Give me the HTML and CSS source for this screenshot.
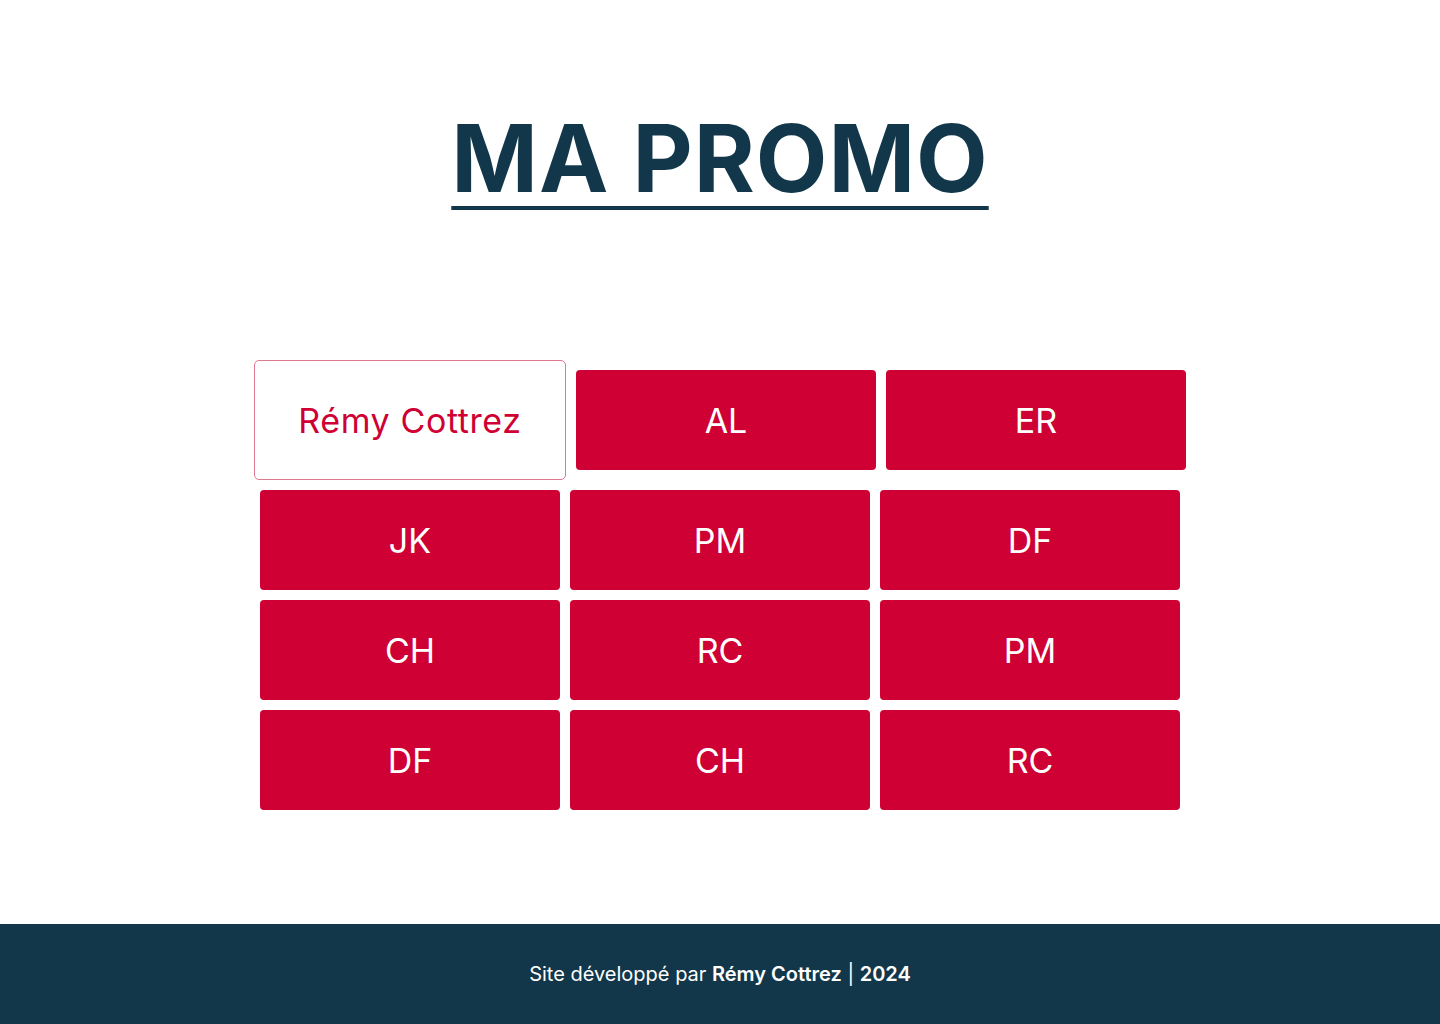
FILE: index.html
```html
<!DOCTYPE html>
<html lang="fr">
<head>
<meta charset="utf-8">
<title>Ma Promo</title>
<link rel="stylesheet" href="styles.css">
</head>
<body>
<header class="header">
  <h1 class="title">MA PROMO</h1>
</header>
<main class="main">
  <div class="grid">
    <div class="card card--active">Rémy Cottrez</div>
    <div class="card">AL</div>
    <div class="card">ER</div>
    <div class="card">JK</div>
    <div class="card">PM</div>
    <div class="card">DF</div>
    <div class="card">CH</div>
    <div class="card">RC</div>
    <div class="card">PM</div>
    <div class="card">DF</div>
    <div class="card">CH</div>
    <div class="card">RC</div>
  </div>
</main>
<footer class="footer">
  <p class="footer-text">Site développé par <strong>Rémy Cottrez</strong> | <strong>2024</strong></p>
</footer>
</body>
</html>
```
FILE: styles.css
```css
* { box-sizing: border-box; }
html, body { margin: 0; padding: 0; }
body {
  font-family: Inter, "Liberation Sans", sans-serif;
  background: #ffffff;
  min-height: 1024px;
  display: flex;
  flex-direction: column;
}
.header {
  display: flex;
  justify-content: center;
  padding-top: 112px;
}
.title {
  margin: 0;
  font-size: 93px;
  line-height: 1;
  font-weight: 700;
  color: #12374a;
  text-decoration: underline;
  text-decoration-thickness: 4px;
  text-underline-offset: 14px;
  letter-spacing: 1px;
}
.main {
  flex: 1;
  display: flex;
  justify-content: center;
  padding-top: 155px;
}
.grid {
  width: 940px;
  display: flex;
  flex-wrap: wrap;
  justify-content: center;
  align-items: center;
  align-content: flex-start;
  gap: 10px;
}
.card {
  width: 300px;
  height: 100px;
  background: #cf0033;
  color: #ffffff;
  border-radius: 4px;
  display: flex;
  align-items: center;
  justify-content: center;
  font-size: 34px;
  font-weight: 400;
}
.card--active {
  width: 312px;
  height: 120px;
  background: #ffffff;
  color: #cf0033;
  border: 1px solid #e07a90;
  border-radius: 5px;
  letter-spacing: 0.6px;
}
.footer {
  height: 100px;
  background: #12374a;
  display: flex;
  align-items: center;
  justify-content: center;
}
.footer-text {
  margin: 0;
  color: #ffffff;
  font-size: 20px;
  font-weight: 400;
}
.footer-text strong { font-weight: 600; }
```
